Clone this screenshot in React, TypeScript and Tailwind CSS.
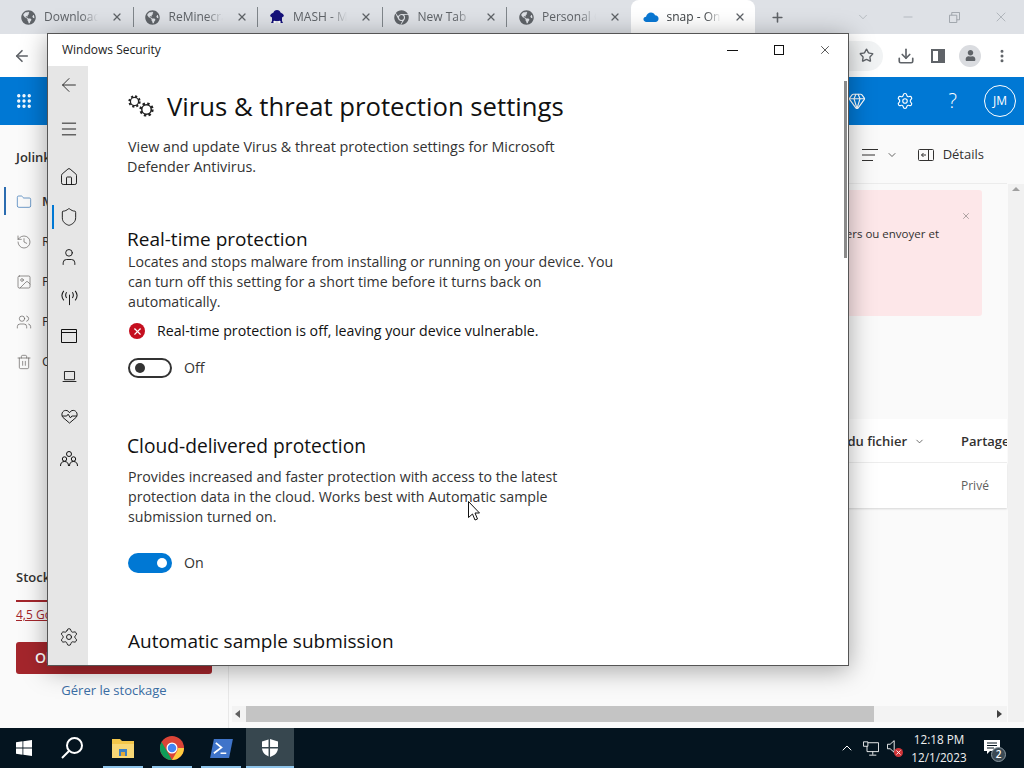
import React from 'react';
import { ArrowLeft, ChevronDown, Download, Gem, Grip, History, Home, Menu, Minus, MoreVertical, Plus, Settings, Shield, Star, User, X, Folder, Image, Users, Trash2, ChevronUp } from 'lucide-react';
import { FaChrome, FaGlobeAmericas, FaUser } from 'react-icons/fa';

const tabs = [
  { title: 'Downloads', kind: 'globe' },
  { title: 'ReMinecraft', kind: 'globe' },
  { title: 'MASH - Mi', kind: 'mash' },
  { title: 'New Tab', kind: 'chrome' },
  { title: 'Personal C', kind: 'globe' },
  { title: 'snap - OneDrive', kind: 'cloud' },
];

const CloudIcon = ({ className }: { className?: string }) => (
  <svg viewBox="0 0 18 12" className={className}>
    <path d="M4 11.5C1.8 11.5.5 10.2.5 8.6c0-1.6 1.2-2.8 2.9-2.9C4.1 3 6.2 1 9 1c2 0 3.800 1.100 4.500 3 2.300 0 4 1.700 4 3.900 0 2-1.500 3.600-3.500 3.600z" fill="#0a78d4" />
  </svg>
);

const MashIcon = () => (
  <svg viewBox="0 0 16 16" className="w-4 h-4">
    <path d="M8 1c2 0 3 1 3.500 2.500L14 5l1 2-2 1.500V12l1 2h-3l-1-2H6l-1 2H2l1-2V8.500L1 7l1-2 2.500-1.500C5 2 6 1 8 1z" fill="#16127a" />
    <circle cx="5.500" cy="13" r="1.200" fill="#fff" />
    <circle cx="10.500" cy="13" r="1.200" fill="#fff" />
  </svg>
);

const TabBar = () => (
  <div className="h-[34px] bg-[#dee1e6] flex items-center pl-[8px] shrink-0">
    {tabs.map((tab, i) => {
      const active = i === 5;
      return (
        <div key={tab.title} className={`relative w-[124.500px] h-[34px] flex items-center pl-[12px] ${active ? 'bg-white rounded-t-lg' : ''}`}>
          <span className="w-4 h-4 flex items-center justify-center shrink-0">
            {tab.kind === 'globe' && <FaGlobeAmericas className="w-[15px] h-[15px] text-[#5f6368]" />}
            {tab.kind === 'chrome' && <FaChrome className="w-[15px] h-[15px] text-[#5f6368]" />}
            {tab.kind === 'mash' && <MashIcon />}
            {tab.kind === 'cloud' && <CloudIcon className="w-[17px] h-[12px]" />}
          </span>
          <span className={`ml-[8px] w-[54px] overflow-hidden whitespace-nowrap text-[12px] [mask-image:linear-gradient(to_right,black_70%,transparent)] ${active ? 'text-[#3c4043]' : 'text-[#5f6368]'}`}>{tab.title}</span>
          <X className="absolute left-[103px] top-[11px] w-[12px] h-[12px] text-[#5f6368]" strokeWidth={2.500} />
          {!active && i !== 4 && <span className="absolute right-[-1px] top-[7px] h-[20px] w-px bg-[#80868b]" />}
        </div>
      );
    })}
    <Plus className="ml-[15px] w-[15px] h-[15px] text-[#5f6368]" strokeWidth={2.500} />
    <div className="ml-auto flex items-center pr-[15px] text-[#9aa0a6]">
      <ChevronDown className="w-[14px] h-[14px] mr-[31px]" strokeWidth={1} />
      <Minus className="w-[14px] h-[14px] mr-[34px]" strokeWidth={1} />
      <svg viewBox="0 0 12 12" className="w-[11px] h-[11px] mr-[33px]" fill="none" stroke="currentColor"><path d="M.5 3.500h8v8h-8zM3 3.500V.5h8.500v8H8.500" /></svg>
      <X className="w-[16px] h-[16px]" strokeWidth={1} />
    </div>
  </div>
);

const ToolBar = () => (
  <div className="h-[43px] bg-white flex items-center pl-[13px] pr-[14px] shrink-0 text-[#5f6368]">
    <ArrowLeft className="w-[18px] h-[18px]" strokeWidth={2.200} />
    <div className="ml-auto flex items-center">
      <span className="w-[34px] h-[30px] rounded-r-full bg-[#f1f3f4] flex items-center justify-center mr-[14px]">
        <Star className="w-[15px] h-[15px]" strokeWidth={2.200} />
      </span>
      <Download className="w-[18px] h-[18px] mr-[16px]" strokeWidth={2.200} />
      <span className="w-[14px] h-[14px] border-2 border-[#5f6368] border-r-[7px] mr-[14px]" />
      <span className="w-[22px] h-[22px] rounded-full bg-[#dadce0] flex items-center justify-center mr-[13px]">
        <FaUser className="w-[11px] h-[11px]" />
      </span>
      <MoreVertical className="w-[16px] h-[16px]" strokeWidth={2.500} />
    </div>
  </div>
);

const BlueBar = () => (
  <div className="h-[48px] bg-[#0078d4] flex items-center text-white pl-[15px] pr-[8px] shrink-0">
    <Grip className="w-[18px] h-[18px]" strokeWidth={2.500} />
    <div className="ml-auto flex items-center">
      <Gem className="w-[18px] h-[18px] mr-[30px]" strokeWidth={1.500} />
      <Settings className="w-[18px] h-[18px] mr-[35px]" strokeWidth={1.500} />
      <span className="text-[20px] font-light mr-[27px] leading-none">?</span>
      <span className="w-[32px] h-[32px] rounded-full border border-white flex items-center justify-center text-[12px]">JM</span>
    </div>
  </div>
);

const sideItems = [
  { icon: Folder, label: 'Mes fichiers', active: true },
  { icon: History, label: 'Récents' },
  { icon: Image, label: 'Photos' },
  { icon: Users, label: 'Partagé' },
  { icon: Trash2, label: 'Corbeille' },
];

const Sidebar = () => (
  <aside className="w-[229px] bg-[#fafafa] border-r border-[#e8e8e8] flex flex-col shrink-0 text-[#323130]">
    <div className="mt-[23px] ml-[16px] h-[18px] text-[13px] font-semibold leading-[18px]">Jolink Mas</div>
    <div className="mt-[16px] flex flex-col">
      {sideItems.map(item => (
        <div key={item.label} className="relative h-[40px] flex items-center pl-[16px] text-[13px]">
          {item.active && <span className="absolute left-[4px] top-[5px] h-[28px] w-[2px] bg-[#2b6cb0]" />}
          <item.icon className={`w-[16px] h-[16px] ${item.active ? 'text-[#2b6cb0]' : 'text-[#605e5c]'}`} strokeWidth={1} />
          <span className={`ml-[10px] ${item.active ? 'font-semibold' : ''}`}>{item.label}</span>
        </div>
      ))}
    </div>
    <div className="mt-auto pb-[29px] px-[16px]">
      <div className="text-[13px] font-semibold h-[18px] leading-[18px]">Stockage</div>
      <div className="mt-[14px] h-[2px] bg-[#a4262c]" />
      <div className="mt-[4px] text-[12px] text-[#a4262c] underline h-[18px] leading-[18px]">4,5 Go utilisés sur 5 Go</div>
      <div className="mt-[18px] h-[32px] bg-[#a4262c] rounded-[3px] text-white text-[14px] font-semibold pl-[19px] leading-[32px]">Obtenir plus</div>
      <div className="mt-[7px] text-center text-[13px] text-[#3b6ea5] h-[18px] leading-[18px]">Gérer le stockage</div>
    </div>
  </aside>
);

const FileArea = () => (
  <main className="flex-1 flex flex-col bg-[#fafafa] min-w-0 relative">
    <div className="h-[59px] flex items-center justify-end pr-[23px] pt-[2px] text-[13px] text-[#323130] border-b border-[#ececec] mr-[17px]">
      <svg viewBox="0 0 16 12" className="w-[16px] h-[12px] mr-[8px]" fill="none" stroke="#323130"><path d="M0 .5h16M0 6h13M0 11.500h11" /></svg>
      <ChevronDown className="w-[12px] h-[12px] mr-[20px]" strokeWidth={1.500} />
      <svg viewBox="0 0 16 14" className="w-[16px] h-[14px] mr-[9px]" fill="none" stroke="#323130"><rect x=".5" y="1.500" width="15" height="11" rx="1" /><path d="M10.500 1.500v11M8 7H3.500M5.500 5l-2 2 2 2" /></svg>
      <span>Détails</span>
    </div>
    <div className="flex justify-end mr-[42px] mt-[6px]">
      <div className="relative w-[420px] h-[126px] bg-[#fde7e9] rounded-[3px] text-[11.500px] text-[#323130] text-right pr-[43px] pt-[35px]">
        envoyer de fichiers ou envoyer et
        <X className="absolute right-[11px] top-[21px] w-[10px] h-[10px] text-[#605e5c]" strokeWidth={1.200} />
      </div>
    </div>
    <div className="mt-[103px] mr-[17px] bg-white">
      <div className="h-[44px] pt-[2px] flex items-center justify-end border-b border-[#efefef] text-[13px] font-semibold text-[#323130] whitespace-nowrap overflow-hidden">
        <span>Taille du fichier</span>
        <ChevronDown className="ml-[7px] w-[11px] h-[11px]" strokeWidth={1.500} />
        <span className="ml-[36px] w-[46px] shrink-0 overflow-hidden">Partage</span>
      </div>
      <div className="h-[45px] flex items-center justify-end text-[12px] text-[#605e5c] shadow-[0_1px_2px_rgba(0,0,0,0.15)]">
        <span className="w-[46px]">Privé</span>
      </div>
    </div>
    <div className="mt-auto mb-[6px] ml-[3px] h-[16px] mr-[17px] flex items-center bg-[#f3f3f3]">
      <span className="w-0 h-0 ml-[3px] border-y-[4px] border-y-transparent border-r-[5px] border-r-[#606060]" />
      <span className="ml-[6px] w-[628px] h-[16px] bg-[#c4c4c4]" />
      <span className="ml-auto mr-[5px] w-0 h-0 border-y-[4px] border-y-transparent border-l-[5px] border-l-[#404040]" />
    </div>
    <div className="absolute right-0 top-[59px] bottom-[6px] w-[16px] bg-[#f1f1f1] flex justify-center pt-[3px]">
      <span className="w-0 h-0 border-x-[4px] border-x-transparent border-b-[4px] border-b-[#a0a0a0]" />
    </div>
  </main>
);

const AntennaIcon = () => (
  <svg viewBox="0 0 20 20" className="w-[19px] h-[19px]" fill="none" stroke="#1a1a1a" strokeWidth="1.100">
    <path d="M10 7v11" />
    <path d="M7 4.500c-1.400 2-1.400 4 0 6M13 4.500c1.400 2 1.400 4 0 6M4 3c-2.400 3-2.400 7 0 10M16 3c2.400 3 2.400 7 0 10" />
  </svg>
);

const railIcon = 'w-[20px] h-[20px] text-[#111]';

const Rail = () => (
  <nav className="w-[40px] pl-[2px] bg-[#e6e6e6] flex flex-col items-center shrink-0">
    <div className="h-[40px] -mt-px flex items-center justify-center"><ArrowLeft className="w-[22px] h-[22px] text-[#222]" strokeWidth={1} /></div>
    <div className="h-[40px] mt-[4px] flex items-center justify-center"><Menu className={railIcon} strokeWidth={1.100} /></div>
    <div className="h-[40px] mt-[8px] flex items-center justify-center"><Home className={railIcon} strokeWidth={1.100} /></div>
    <div className="relative w-full h-[40px] flex items-center justify-center">
      <span className="absolute left-[2px] top-[8px] w-[2px] h-[24px] bg-[#0078d4]" />
      <Shield className={railIcon} strokeWidth={1.100} />
    </div>
    <div className="h-[40px] flex items-center justify-center"><User className={railIcon} strokeWidth={1.100} /></div>
    <div className="h-[40px] flex items-center justify-center"><AntennaIcon /></div>
    <div className="h-[40px] -mt-px flex items-center justify-center">
      <svg viewBox="0 0 16 14" className="w-[16px] h-[14px]" fill="none" stroke="#111"><path d="M.5.5h15v13H.5zM.5 3.500h15" /></svg>
    </div>
    <div className="h-[40px] flex items-center justify-center">
      <svg viewBox="0 0 16 12" className="w-[15px] h-[11px]" fill="none" stroke="#111"><path d="M2.500.5h11v9h-11zM.5 11.500h15" /></svg>
    </div>
    <div className="h-[40px] flex items-center justify-center">
      <svg viewBox="0 0 18 16" className="w-[17px] h-[15px]" fill="none" stroke="#111"><path d="M9 15L2 9C-.5 6 1.500 1.500 5 1.500 7 1.500 8 2.500 9 4c1-1.500 2-2.500 4-2.500 3.500 0 5.500 4.500 3 7.500z" /><path d="M1 7.500h5l1.500-2 2.500 4 1.500-2H17" /></svg>
    </div>
    <div className="h-[40px] mt-[3px] flex items-center justify-center">
      <svg viewBox="0 0 18 18" className="w-[18px] h-[18px]" fill="none" stroke="#111"><circle cx="9" cy="4" r="2.500" /><circle cx="4.500" cy="9" r="2.200" /><circle cx="13.500" cy="9" r="2.200" /><path d="M.5 16c0-3 1.500-4.500 4-4.500s4 1.500 4 4.500M9.500 16c0-3 1.500-4.500 4-4.500s4 1.500 4 4.500" /></svg>
    </div>
    <div className="mt-auto mb-[8px] h-[40px] flex items-center justify-center"><Settings className={railIcon} strokeWidth={1.100} /></div>
  </nav>
);

const Toggle = ({ on }: { on: boolean }) => (
  <span className={`w-[44px] h-[20px] rounded-full flex items-center px-[5px] ${on ? 'bg-[#0078d4] justify-end' : 'border-2 border-[#333] justify-start'}`}>
    <span className={`w-[10px] h-[10px] rounded-full ${on ? 'bg-white' : 'bg-[#333]'}`} />
  </span>
);

const Gear = ({ className }: { className: string }) => (
  <svg viewBox="0 0 20 20" className={className} fill="none" stroke="#222">
    <circle cx="10" cy="10" r="7.500" strokeWidth="4" strokeDasharray="3 2.890" />
    <circle cx="10" cy="10" r="6.300" fill="#fff" strokeWidth="2" />
    <circle cx="10" cy="10" r="3" fill="#fff" stroke="none" />
  </svg>
);

const SecurityWindow = () => (
  <div className="absolute left-[47px] top-[33px] w-[802px] h-[633px] bg-white border border-[#555] shadow-[0_4px_24px_rgba(0,0,0,0.35)] flex flex-col overflow-hidden [font-family:'Open_Sans',sans-serif] text-[#111]">
    <div className="h-[32px] flex items-center pl-[14px] shrink-0">
      <span className="text-[12px] text-[#222]">Windows Security</span>
      <div className="ml-auto flex items-center text-[#111]">
        <span className="w-[11px] h-px bg-[#111] mr-[36px]" />
        <span className="w-[10px] h-[10px] border border-[#111] mr-[34px]" />
        <X className="w-[14px] h-[14px] mr-[16px]" strokeWidth={1.200} />
      </div>
    </div>
    <div className="flex-1 flex min-h-0 relative">
      <Rail />
      <div className="flex-1 pl-[40px] text-[14.200px] leading-[20px] text-[#333]">
        <div className="mt-[21px] h-[40px] flex items-center">
          <span className="relative w-[39px] h-[24px] shrink-0">
            <Gear className="absolute left-0 top-0 w-[13px] h-[13px]" />
            <Gear className="absolute left-[11px] top-[7px] w-[15px] h-[15px]" />
          </span>
          <h1 className="text-[25.700px] leading-[40px] text-[#111] whitespace-nowrap">Virus &amp; threat protection settings</h1>
        </div>
        <p className="mt-[10px] whitespace-nowrap text-[14.330px]">View and update Virus &amp; threat protection settings for Microsoft<br /><span className="-ml-px">Defender Antivirus.</span></p>
        <h2 className="mt-[49px] -ml-px h-[26px] leading-[26px] text-[19px] text-[#111]">Real-time protection</h2>
        <p className="whitespace-nowrap">Locates and stops malware from installing or running on your device. You<br />can turn off this setting for a short time before it turns back on<br />automatically.</p>
        <div className="mt-[9px] h-[20px] flex items-center text-[#111]">
          <span className="ml-px w-[16px] h-[16px] rounded-full bg-[#c50f1f] flex items-center justify-center mr-[12px]"><X className="w-[11px] h-[11px] text-white" strokeWidth={2.500} /></span>
          Real-time protection is off, leaving your device vulnerable.
        </div>
        <div className="mt-[16px] h-[21px] flex items-center gap-[12px]"><Toggle on={false} /><span>Off</span></div>
        <h2 className="mt-[55px] -ml-px h-[26px] leading-[26px] text-[19.200px] text-[#111]">Cloud-delivered protection</h2>
        <p className="mt-[8px] whitespace-nowrap">Provides increased and faster protection with access to the latest<br />protection data in the cloud. Works best with Automatic sample<br />submission turned on.</p>
        <div className="mt-[25px] h-[21px] flex items-center gap-[12px]"><Toggle on /><span>On</span></div>
        <h2 className="mt-[55px] h-[26px] leading-[26px] text-[19px] text-[#111]">Automatic sample submission</h2>
      </div>
      <span className="absolute right-[1px] top-[15px] w-[3px] h-[177px] bg-[#8a8a8a]" />
    </div>
  </div>
);

const TaskBar = () => (
  <div className="h-[40px] bg-[#04141f] flex items-stretch shrink-0 text-white">
    <div className="w-[48px] flex items-center justify-center">
      <svg viewBox="0 0 16 16" className="w-[16px] h-[16px]" fill="#fff"><path d="M0 2.200l6.500-.9v6.300H0zM7.300 1.200L16 0v7.600H7.300zM0 8.400h6.500v6.300L0 13.800zM7.300 8.400H16V16l-8.700-1.200z" /></svg>
    </div>
    <div className="w-[48px] flex items-center justify-center">
      <svg viewBox="0 0 24 24" className="w-[24px] h-[24px]" fill="none" stroke="#fff" strokeWidth="2"><circle cx="14.500" cy="9.500" r="7.500" /><path d="M9 15l-7 7" /></svg>
    </div>
    <div className="relative ml-[7px] w-[40px] flex items-center justify-center">
      <svg viewBox="0 0 22 20" className="w-[22px] h-[20px]"><path d="M0 1h8l2 2h12v17H0z" fill="#f3c64a" /><path d="M0 6h22v14H0z" fill="#f8d775" /><path d="M7 11h8v7H7z" fill="#3b7fc4" /><path d="M9 14h4v4H9z" fill="#e0a93a" /></svg>
      <span className="absolute bottom-0 left-0 right-0 h-[2px] bg-[#8ec4ea]" />
    </div>
    <div className="relative ml-[9px] w-[40px] flex items-center justify-center">
      <svg viewBox="0 0 48 48" className="w-[24px] h-[24px]">
        <circle cx="24" cy="24" r="24" fill="#db4437" />
        <path d="M24 48a24 24 0 0 1-20.800-36L14 30.500 24 48z" fill="#0f9d58" />
        <path d="M24 48l10.400-18 1.600-6h12a24 24 0 0 1-24 24z" fill="#ffcd40" />
        <circle cx="24" cy="24" r="11" fill="#fff" />
        <circle cx="24" cy="24" r="8.500" fill="#4285f4" />
      </svg>
      <span className="absolute bottom-0 left-0 right-0 h-[2px] bg-[#8ec4ea]" />
    </div>
    <div className="relative ml-[9px] w-[40px] flex items-center justify-center">
      <svg viewBox="0 0 24 20" className="w-[23px] h-[19px]"><path d="M4 0h20l-4 20H0z" fill="#3f74c9" /><path d="M6 4l6 5-8 6M11 15h6" fill="none" stroke="#fff" strokeWidth="1.800" /></svg>
      <span className="absolute bottom-0 left-0 right-0 h-[2px] bg-[#8ec4ea]" />
    </div>
    <div className="relative ml-[5px] w-[48px] flex items-center justify-center bg-[#37474f]">
      <svg viewBox="0 0 16 18" className="w-[16px] h-[18px]"><path d="M8 0l8 2.500V9c0 4.500-3.500 7.500-8 9-4.500-1.500-8-4.500-8-9V2.500z" fill="#fff" /><path d="M7.300 0v18M0 8.700h16" stroke="#37474f" strokeWidth="1.500" /></svg>
      <span className="absolute bottom-0 left-0 right-0 h-[2px] bg-[#8ec4ea]" />
    </div>
    <div className="ml-auto flex items-center">
      <ChevronUp className="w-[16px] h-[16px] mr-[8px]" strokeWidth={1.500} />
      <svg viewBox="0 0 18 16" className="w-[16px] h-[15px] mr-[8px]" fill="none" stroke="#fff"><path d="M4.500 1.500h13v10h-13zM11 11.500v3.500M7 15.500h8" /><path d="M.5.5h5v5h-5z" fill="#04141f" /></svg>
      <span className="relative w-[13px] h-[16px] mr-[5px]">
        <svg viewBox="0 0 10 14" className="w-[9px] h-[13px] absolute left-0 top-0" fill="none" stroke="#fff"><path d="M.5 4.500h3L8 .5v13l-4.500-4h-3z" /></svg>
        <span className="absolute right-[-3px] bottom-[-1px] w-[9px] h-[9px] rounded-full bg-[#d13438] text-white flex items-center justify-center"><X className="w-[7px] h-[7px]" strokeWidth={3} /></span>
      </span>
      <div className="w-[68px] text-center text-[11.700px] leading-[18px] [font-family:'Open_Sans',sans-serif] text-[#f0f0f0] mr-[11px]">
        <div>12:18 PM</div>
        <div>12/1/2023</div>
      </div>
      <span className="relative w-[16px] h-[16px] mr-[24px]">
        <svg viewBox="0 0 16 14" className="w-[16px] h-[14px]"><path d="M0 0h16v11H6l-3 3v-3H0z" fill="#fff" /><path d="M3 3h10M3 5.500h10M3 8h7" stroke="#04141f" /></svg>
        <span className="absolute left-[7px] top-[7px] w-[15px] h-[15px] rounded-full bg-[#3b4a54] border border-[#8b98a0] text-[10px] font-semibold flex items-center justify-center">2</span>
      </span>
    </div>
  </div>
);

const Cursor = () => (
  <svg viewBox="0 0 12 20" className="absolute left-[468px] top-[501px] w-[12px] h-[20px]">
    <path d="M.5.5v16l4-3.500 2.500 6 2.500-1-2.500-6H11.500z" fill="#fff" stroke="#111" />
  </svg>
);

export default function App() {
  return (
    <div className="relative w-[1024px] h-[768px] overflow-hidden flex flex-col [font-family:'Open_Sans',sans-serif]">
      <TabBar />
      <ToolBar />
      <BlueBar />
      <div className="flex-1 flex min-h-0">
        <Sidebar />
        <FileArea />
      </div>
      <TaskBar />
      <SecurityWindow />
      <Cursor />
    </div>
  );
}
